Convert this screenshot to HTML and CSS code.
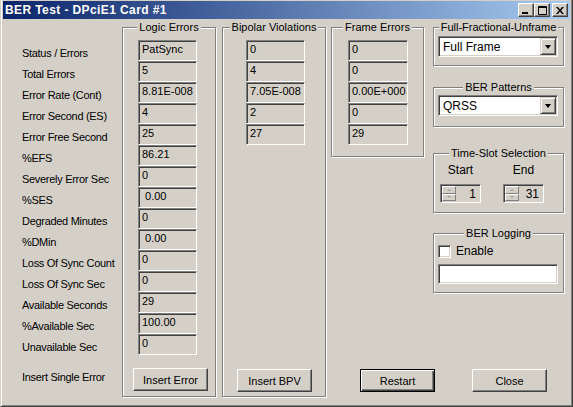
FILE: index.html
```html
<!DOCTYPE html>
<html lang="en">
<head>
    <meta charset="UTF-8">
    <title>BER Test - DPciE1 Card #1</title>
    <link rel="stylesheet" href="styles.css">
</head>
<body>
    <div class="window">
        <div class="titlebar">
            <span class="title">BER Test - DPciE1 Card #1</span>
            <div class="caption-btns">
                <span class="cap-btn">
                    <svg width="8" height="7" viewBox="0 0 8 7"><rect x="0" y="5" width="6" height="2" fill="#000"/></svg>
                </span>
                <span class="cap-btn">
                    <svg width="9" height="9" viewBox="0 0 9 9"><path d="M0.5 0.5h8v8h-8z M0.5 1.5h8" fill="none" stroke="#000"/></svg>
                </span>
                <span class="cap-btn close">
                    <svg width="8" height="7" viewBox="0 0 8 7"><path d="M0 0h2l2 2.5l2-2.5h2l-3 3.5l3 3.5h-2l-2-2.5l-2 2.5h-2l3-3.5z" fill="#000"/></svg>
                </span>
            </div>
        </div>

        <div class="dialog">
            <div class="labels">
                <div class="label">Status / Errors</div>
                <div class="label">Total Errors</div>
                <div class="label">Error Rate (Cont)</div>
                <div class="label">Error Second (ES)</div>
                <div class="label">Error Free Second</div>
                <div class="label">%EFS</div>
                <div class="label">Severely Error Sec</div>
                <div class="label">%SES</div>
                <div class="label">Degraded Minutes</div>
                <div class="label">%DMin</div>
                <div class="label">Loss Of Sync Count</div>
                <div class="label">Loss Of Sync Sec</div>
                <div class="label">Available Seconds</div>
                <div class="label">%Available Sec</div>
                <div class="label">Unavailable Sec</div>
                <div class="label insert-label">Insert Single Error</div>
            </div>

            <div class="group logic">
                <div class="group-title">Logic Errors</div>
                <div class="fields">
                    <div class="field">PatSync</div>
                    <div class="field">5</div>
                    <div class="field">8.81E-008</div>
                    <div class="field">4</div>
                    <div class="field">25</div>
                    <div class="field">86.21</div>
                    <div class="field">0</div>
                    <div class="field"> 0.00</div>
                    <div class="field">0</div>
                    <div class="field"> 0.00</div>
                    <div class="field">0</div>
                    <div class="field">0</div>
                    <div class="field">29</div>
                    <div class="field">100.00</div>
                    <div class="field">0</div>
                </div>
                <button class="btn">Insert Error</button>
            </div>

            <div class="group bipolar">
                <div class="group-title">Bipolar Violations</div>
                <div class="fields">
                    <div class="field">0</div>
                    <div class="field">4</div>
                    <div class="field">7.05E-008</div>
                    <div class="field">2</div>
                    <div class="field">27</div>
                </div>
                <button class="btn">Insert BPV</button>
            </div>

            <div class="right-area">
                <div class="right-top">
                    <div class="group frame">
                        <div class="group-title">Frame Errors</div>
                        <div class="fields">
                            <div class="field">0</div>
                            <div class="field">0</div>
                            <div class="field">0.00E+000</div>
                            <div class="field">0</div>
                            <div class="field">29</div>
                        </div>
                    </div>

                    <div class="side">
                        <div class="group g-frame-type">
                            <div class="group-title">Full-Fractional-Unframe</div>
                            <div class="combo">
                                <span class="combo-text">Full Frame</span>
                                <span class="combo-drop"><span class="arrow"></span></span>
                            </div>
                        </div>

                        <div class="group g-pattern">
                            <div class="group-title">BER Patterns</div>
                            <div class="combo">
                                <span class="combo-text">QRSS</span>
                                <span class="combo-drop"><span class="arrow"></span></span>
                            </div>
                        </div>

                        <div class="group g-slots">
                            <div class="group-title">Time-Slot Selection</div>
                            <div class="slots">
                                <div class="slot">
                                    <div class="slot-label">Start</div>
                                    <div class="spinner">
                                        <div class="updown">
                                            <span class="ud up"></span>
                                            <span class="ud down"></span>
                                        </div>
                                        <span class="spin-value">1</span>
                                    </div>
                                </div>
                                <div class="slot">
                                    <div class="slot-label">End</div>
                                    <div class="spinner">
                                        <div class="updown">
                                            <span class="ud up"></span>
                                            <span class="ud down"></span>
                                        </div>
                                        <span class="spin-value">31</span>
                                    </div>
                                </div>
                            </div>
                        </div>

                        <div class="group g-logging">
                            <div class="group-title">BER Logging</div>
                            <label class="check-row">
                                <span class="checkbox"></span>
                                <span>Enable</span>
                            </label>
                            <div class="textbox"></div>
                        </div>
                    </div>
                </div>

                <div class="bottom-btns">
                    <button class="btn default">Restart</button>
                    <button class="btn close-btn">Close</button>
                </div>
            </div>
        </div>
    </div>
</body>
</html>
```

FILE: styles.css
```css
* {
    box-sizing: border-box;
}

body {
    margin: 0;
    background-color: #d4d0c8;
    font-family: "Liberation Sans", Arial, sans-serif;
    font-size: 11px;
    color: #000;
}

.window {
    width: 573px;
    height: 407px;
    background-color: #d4d0c8;
    padding: 1px 2px 0 2px;
    border-left: 1px solid #d4d0c8;
    border-right: 1px solid #404040;
    border-bottom: 1px solid #404040;
    box-shadow: inset 1px 0 0 #fff, inset -1px -1px 0 #808080;
}

/* title bar */
.titlebar {
    height: 18px;
    display: flex;
    align-items: center;
    padding: 0 2px 0 2px;
    background: linear-gradient(to right, #0a246a, #a6caf0);
}

.title {
    color: #fff;
    font-weight: bold;
    font-size: 12px;
    letter-spacing: 0.4px;
    flex: 1;
}

.caption-btns {
    display: flex;
}

.cap-btn {
    width: 16px;
    height: 14px;
    display: flex;
    align-items: center;
    justify-content: center;
    background-color: #d4d0c8;
    border-top: 1px solid #fff;
    border-left: 1px solid #fff;
    border-right: 1px solid #404040;
    border-bottom: 1px solid #404040;
    box-shadow: inset -1px -1px 0 #808080;
}

.cap-btn.close {
    margin-left: 2px;
}

/* dialog body */
.dialog {
    display: flex;
    align-items: flex-start;
    padding-left: 19px;
}

.labels {
    width: 100px;
    margin-top: 21px;
}

.label {
    height: 21px;
    line-height: 26px;
    letter-spacing: -0.3px;
    white-space: nowrap;
}

.label.insert-label {
    margin-top: 9px;
}

.group {
    position: relative;
    margin-top: 8px;
    border: 1px solid #808080;
    box-shadow: 1px 1px 0 #fff, inset 1px 1px 0 #fff;
    display: flex;
    flex-direction: column;
    align-items: flex-start;
}

.group-title {
    align-self: center;
    margin-top: -7px;
    padding: 0 2px;
    line-height: 13px;
    background-color: #d4d0c8;
    white-space: nowrap;
}

.fields {
    margin-top: 6px;
}

.field {
    width: 59px;
    height: 21px;
    padding: 2px 0 0 3px;
    line-height: 13px;
    white-space: pre;
    border-top: 1px solid #808080;
    border-left: 1px solid #808080;
    border-bottom: 1px solid #fff;
    border-right: 1px solid #fff;
    box-shadow: inset 1px 1px 0 #404040;
}

.btn {
    width: 75px;
    height: 23px;
    padding: 0;
    font-family: inherit;
    font-size: 11px;
    color: #000;
    background-color: #d4d0c8;
    border-top: 1px solid #fff;
    border-left: 1px solid #fff;
    border-right: 1px solid #404040;
    border-bottom: 1px solid #404040;
    box-shadow: inset -1px -1px 0 #808080;
}

.btn.default {
    border: 1px solid #000;
    box-shadow: inset 1px 1px 0 #fff, inset -1px -1px 0 #404040, inset -2px -2px 0 #808080;
}

.logic {
    width: 94px;
    height: 370px;
}

.logic .fields {
    margin-left: 15px;
}

.logic .btn {
    margin: auto 0 5px 10px;
}

.bipolar {
    width: 104px;
    height: 370px;
    margin-left: 6px;
}

.bipolar .fields {
    margin-left: 23px;
}

.bipolar .btn {
    margin: auto 0 4px 14px;
}

.right-area {
    margin-left: 5px;
    margin-top: 8px;
    height: 365px;
    display: flex;
    flex-direction: column;
}

.right-top {
    display: flex;
    align-items: flex-start;
}

.frame {
    width: 93px;
    height: 130px;
    margin-top: 0;
}

.frame .fields {
    margin-left: 16px;
}

.frame .field {
    width: 60px;
}

.side {
    width: 131px;
    margin-left: 9px;
    display: flex;
    flex-direction: column;
}

.side .group {
    width: 131px;
}

.g-frame-type {
    height: 39px;
    margin-top: 0;
}

.g-pattern {
    height: 40px;
    margin-top: 21px;
}

.g-slots {
    height: 60px;
    margin-top: 26px;
}

.g-logging {
    height: 60px;
    margin-top: 20px;
}

/* combo box */
.combo {
    width: 120px;
    height: 21px;
    margin: 2px 0 0 4px;
    display: flex;
    align-items: center;
    background-color: #fff;
    border-top: 1px solid #808080;
    border-left: 1px solid #808080;
    border-bottom: 1px solid #fff;
    border-right: 1px solid #fff;
    box-shadow: inset 1px 1px 0 #404040, inset -1px -1px 0 #d4d0c8;
    padding: 1px 1px 1px 4px;
}

.g-pattern .combo {
    margin-top: 1px;
}

.combo-text {
    flex: 1;
    font-size: 12px;
}

.combo-drop {
    width: 16px;
    height: 17px;
    display: flex;
    align-items: center;
    justify-content: center;
    background-color: #d4d0c8;
    border-top: 1px solid #d4d0c8;
    border-left: 1px solid #d4d0c8;
    border-right: 1px solid #404040;
    border-bottom: 1px solid #404040;
    box-shadow: inset 1px 1px 0 #fff, inset -1px -1px 0 #808080;
}

.arrow {
    width: 0;
    height: 0;
    border-left: 3.5px solid transparent;
    border-right: 3.5px solid transparent;
    border-top: 4px solid #000;
}

/* time slot spinners */
.slots {
    display: flex;
    margin: 4px 0 0 6px;
    gap: 22px;
}

.slot {
    display: flex;
    flex-direction: column;
    align-items: center;
}

.slot-label {
    line-height: 13px;
    font-size: 12px;
    margin-bottom: 7px;
}

.spinner {
    width: 41px;
    height: 19px;
    display: flex;
    align-items: center;
    padding: 1px 4px 1px 1px;
    border-top: 1px solid #808080;
    border-left: 1px solid #808080;
    border-bottom: 1px solid #fff;
    border-right: 1px solid #fff;
    box-shadow: inset 1px 1px 0 #404040;
}

.updown {
    display: flex;
    flex-direction: column;
    width: 14px;
    height: 15px;
}

.ud {
    flex: 1;
    display: flex;
    align-items: center;
    justify-content: center;
    border-top: 1px solid #fff;
    border-left: 1px solid #fff;
    border-right: 1px solid #808080;
    border-bottom: 1px solid #808080;
}

.ud::after {
    content: "";
    width: 0;
    height: 0;
    border-left: 2px solid transparent;
    border-right: 2px solid transparent;
}

.ud.up::after {
    border-bottom: 2px solid #a0a0a0;
}

.ud.down::after {
    border-top: 2px solid #a0a0a0;
}

.spin-value {
    flex: 1;
    text-align: right;
    font-size: 12px;
}

/* logging */
.check-row {
    display: flex;
    align-items: center;
    gap: 5px;
    margin: 4px 0 0 4px;
    font-size: 12px;
}

.checkbox {
    width: 13px;
    height: 13px;
    background-color: #fff;
    border-top: 1px solid #808080;
    border-left: 1px solid #808080;
    border-bottom: 1px solid #fff;
    border-right: 1px solid #fff;
    box-shadow: inset 1px 1px 0 #404040, inset -1px -1px 0 #d4d0c8;
}

.textbox {
    width: 120px;
    height: 20px;
    margin: 6px 0 0 4px;
    background-color: #fff;
    border-top: 1px solid #808080;
    border-left: 1px solid #808080;
    border-bottom: 1px solid #fff;
    border-right: 1px solid #fff;
    box-shadow: inset 1px 1px 0 #404040, inset -1px -1px 0 #d4d0c8;
}

.bottom-btns {
    margin-top: auto;
    display: flex;
    padding-left: 29px;
}

.close-btn {
    margin-left: 37px;
}
```
